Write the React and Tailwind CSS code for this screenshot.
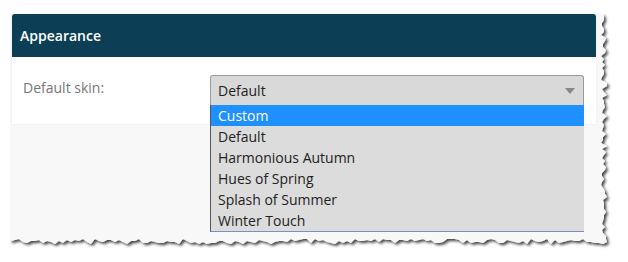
import React from 'react';

const skins = ['Custom', 'Default', 'Harmonious Autumn', 'Hues of Spring', 'Splash of Summer', 'Winter Touch'];

// torn paper edge for the screenshot frame
function tornPoints(w, h) {
  const pts = ['0,0', `${w - 6},0`];
  let s = 7;
  const rnd = () => {
    s = (s * 9301 + 49297) % 233280;
    return s / 233280;
  };
  for (let y = 3; y < h - 6; y += 3) {
    pts.push(`${w - 8 + Math.round(rnd() * 6)},${y}`);
  }
  for (let x = w - 6; x > 0; x -= 4) {
    pts.push(`${x},${h - 10 + Math.round(rnd() * 5)}`);
  }
  pts.push(`0,${h - 8}`);
  return pts.join(' ');
}

export default function App() {
  return (
    <div className="w-[628px] h-[262px] bg-white pl-[10px] pt-[10px] overflow-hidden" style={{ fontFamily: '"Open Sans", "Noto Sans", sans-serif' }}>
      <div className="relative w-[604px] h-[240px]">
        <svg className="absolute inset-0" width="604" height="240">
          <defs>
            <filter id="sh" x="-5%" y="-5%" width="110%" height="110%">
              <feDropShadow dx="2" dy="2" stdDeviation="1.8" floodColor="#000" floodOpacity="0.75" />
            </filter>
          </defs>
          <polygon points={tornPoints(599, 235)} fill="#f8f8f8" filter="url(#sh)" />
        </svg>

        <div className="relative ml-[2px] mt-[4px] w-[584px] bg-white rounded-t-[3px] shadow-[0_0_2px_rgba(0,0,0,0.08)]">
          <div className="h-[43px] bg-[#0c3f55] rounded-t-[3px] pl-2 flex items-center text-white text-[14px] font-semibold">
            Appearance
          </div>
          <div className="h-[67px] flex pl-[11px] pt-[18px]">
            <div className="w-[187px] mt-[3px] leading-5 text-[14px] text-[#777]">Default skin:</div>
            <div className="relative w-[374px] h-[31px] bg-[#d9d9d9] border border-[#9a9a9a] border-b-black rounded-t-[3px] flex items-center pl-[7px] text-[14px] text-[#222]">
              Default
              <svg className="absolute right-[8px] top-[12px]" width="10" height="6" viewBox="0 0 10 6">
                <path d="M0 0h10L5 6z" fill="#888" />
              </svg>
              <ul className="absolute top-full left-[-1px] right-[-1px] bg-[#dcdcdc] border-l border-l-[#555] border-b border-b-[#7b8fc7] text-[14px] text-[#222] z-10">
                {skins.map((s, i) => (
                  <li
                    key={s}
                    className={i === 0 ? 'h-[21px] leading-[21px] pl-[7px] bg-[#1e90ff] text-white' : 'h-[21px] leading-[21px] pl-[7px]'}
                  >
                    {s}
                  </li>
                ))}
              </ul>
            </div>
          </div>
        </div>
      </div>
    </div>
  );
}
